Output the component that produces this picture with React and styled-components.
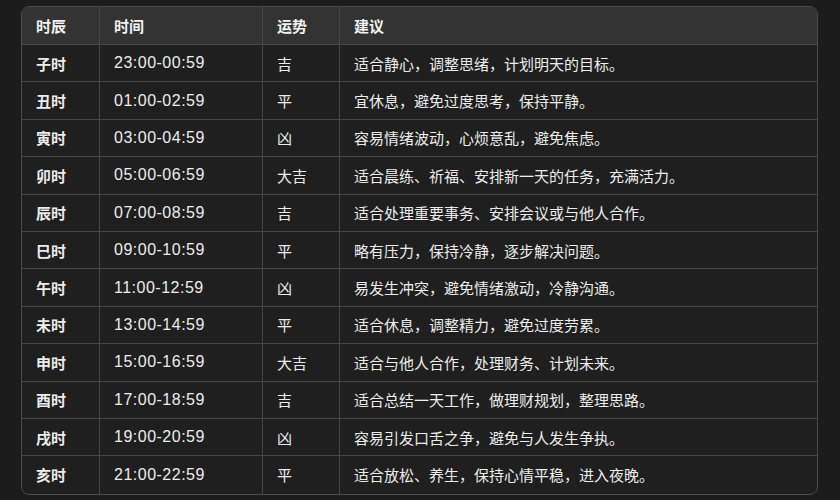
import React from 'react';
import styled, {createGlobalStyle} from 'styled-components';

const rows = [
    ['子时', '23:00-00:59', '吉', '适合静心，调整思绪，计划明天的目标。'],
    ['丑时', '01:00-02:59', '平', '宜休息，避免过度思考，保持平静。'],
    ['寅时', '03:00-04:59', '凶', '容易情绪波动，心烦意乱，避免焦虑。'],
    ['卯时', '05:00-06:59', '大吉', '适合晨练、祈福、安排新一天的任务，充满活力。'],
    ['辰时', '07:00-08:59', '吉', '适合处理重要事务、安排会议或与他人合作。'],
    ['巳时', '09:00-10:59', '平', '略有压力，保持冷静，逐步解决问题。'],
    ['午时', '11:00-12:59', '凶', '易发生冲突，避免情绪激动，冷静沟通。'],
    ['未时', '13:00-14:59', '平', '适合休息，调整精力，避免过度劳累。'],
    ['申时', '15:00-16:59', '大吉', '适合与他人合作，处理财务、计划未来。'],
    ['酉时', '17:00-18:59', '吉', '适合总结一天工作，做理财规划，整理思路。'],
    ['戌时', '19:00-20:59', '凶', '容易引发口舌之争，避免与人发生争执。'],
    ['亥时', '21:00-22:59', '平', '适合放松、养生，保持心情平稳，进入夜晚。'],
];

const GlobalStyle = createGlobalStyle`
    body {
        margin: 0;
        background: #1c1c1c;
        font-family: "Liberation Sans", "Noto Sans CJK SC", sans-serif;
    }
`;

const Page = styled.div`
    width: 840px;
    height: 500px;
    box-sizing: border-box;
    padding: 6px 22px 0 21px;
`;

const Grid = styled.div`
    display: grid;
    grid-template-columns: 78px 163px 77px 1fr;
    grid-template-rows: 38px repeat(12, 37.4px);
    border: 1px solid #4a4a4a;
    border-radius: 8px;
    overflow: hidden;
    background: #1f1f1f;
`;

const Cell = styled.div`
    display: flex;
    align-items: center;
    padding: 0 14px;
    box-sizing: border-box;
    color: ${p => p.$head ? '#f2f2f2' : '#ececec'};
    background: ${p => p.$head ? '#333333' : 'transparent'};
    font-size: 15px;
    font-weight: ${p => p.$bold ? 700 : 400};
    white-space: nowrap;
    border-right: ${p => p.$last ? 'none' : '1px solid #474747'};
    border-bottom: ${p => p.$bottom ? 'none' : '1px solid #474747'};
`;

const Time = styled.span`
    font-size: 16px;
    letter-spacing: 0.5px;
`;

export default function App() {
    const head = ['时辰', '时间', '运势', '建议'];
    return (
        <Page>
            <GlobalStyle/>
            <Grid>
                {head.map((h, i) => (
                    <Cell key={h} $head $bold $last={i === 3}>{h}</Cell>
                ))}
                {rows.map((r, ri) => r.map((c, ci) => (
                    <Cell key={ri + '-' + ci} $bold={ci === 0} $last={ci === 3} $bottom={ri === rows.length - 1}>
                        {ci === 1 ? <Time>{c}</Time> : c}
                    </Cell>
                )))}
            </Grid>
        </Page>
    );
}
